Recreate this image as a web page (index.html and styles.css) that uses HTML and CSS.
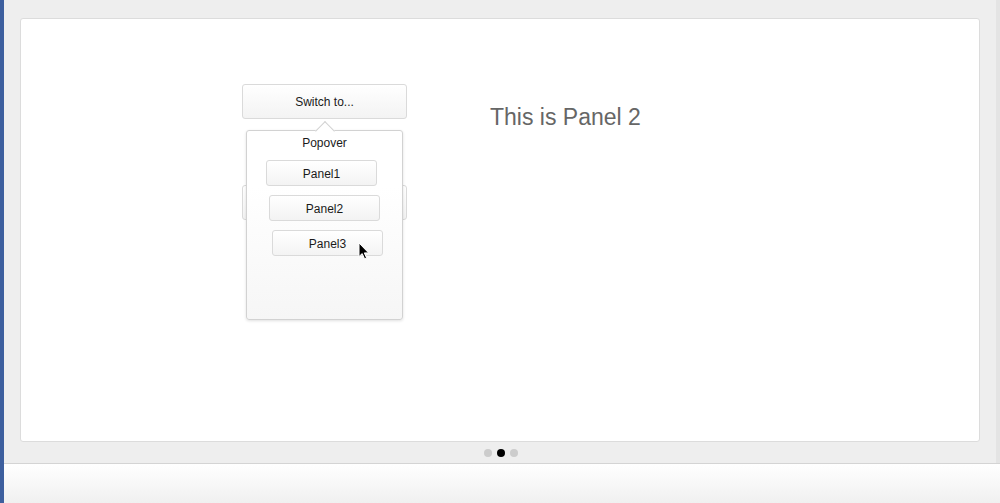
FILE: index.html
```html
<!DOCTYPE html>
<html>
<head>
<meta charset="utf-8">
<link rel="stylesheet" href="styles.css">
</head>
<body>
<div class="shell">
  <div class="edge-left"></div>
  <div class="main">
    <div class="top">
      <div class="stage">
        <div class="card">
          <div class="left-col">
            <button class="btn btn-switch">Switch to...</button>
            <button class="btn btn-switch btn-second" aria-hidden="true"></button>
            <div class="popover">
              <div class="arrow"></div>
              <div class="pop-title">Popover</div>
              <div class="pop-list">
                <button class="btn pbtn shift-l">Panel1</button>
                <button class="btn pbtn">Panel2</button>
                <button class="btn pbtn shift-r">Panel3</button>
              </div>
            </div>
            <svg class="cursor" width="12" height="18" viewBox="0 0 12 18"><path d="M1 1 L1 14.5 L4.2 11.6 L6.6 16.8 L8.6 15.9 L6.3 10.9 L10.6 10.9 Z" fill="#000" stroke="#fff" stroke-width="1" stroke-linejoin="round"/></svg>
          </div>
          <h1 class="panel-title">This is Panel 2</h1>
        </div>
        <div class="dots">
          <span class="dot"></span>
          <span class="dot on"></span>
          <span class="dot"></span>
        </div>
      </div>
      <div class="edge-right"></div>
    </div>
    <div class="bottom-bar"></div>
  </div>
</div>
</body>
</html>
```

FILE: styles.css
```css
html, body {
  margin: 0;
  padding: 0;
  height: 100%;
}
body {
  background: #eeeeee;
  font-family: "Liberation Sans", Arial, sans-serif;
  overflow: hidden;
}
.shell {
  display: flex;
  height: 503px;
}
.edge-left {
  width: 4px;
  background: #3d5f9e;
  flex: none;
}
.main {
  flex: 1;
  display: flex;
  flex-direction: column;
}
.top {
  display: flex;
  flex: none;
  height: 463px;
}
.stage {
  flex: 1;
  padding: 18px 16px 0 16px;
  display: flex;
  flex-direction: column;
}
.edge-right {
  width: 4px;
  background: #e4e4e4;
  flex: none;
}
.card {
  height: 424px;
  box-sizing: border-box;
  background: #ffffff;
  border: 1px solid #dcdcdc;
  border-radius: 3px;
  display: flex;
  align-items: flex-start;
  padding: 65px 0 0 221px;
}
.left-col {
  position: relative;
  width: 165px;
  display: flex;
  flex-direction: column;
  gap: 66px;
  flex: none;
}
.btn {
  font-family: "Liberation Sans", Arial, sans-serif;
  font-size: 12px;
  color: #1a1a1a;
  background: linear-gradient(#ffffff, #f3f3f3);
  border: 1px solid #dadada;
  border-radius: 3px;
  padding: 0;
  margin: 0;
  box-sizing: border-box;
}
.btn-switch {
  width: 165px;
  height: 35px;
  padding-top: 1px;
}
.popover {
  position: absolute;
  left: 4px;
  top: 46px;
  width: 157px;
  height: 190px;
  box-sizing: border-box;
  background: linear-gradient(#ffffff 30%, #f6f6f6);
  border: 1px solid #d2d2d2;
  border-radius: 3px;
  box-shadow: 0 1px 3px rgba(0,0,0,0.12);
  display: flex;
  flex-direction: column;
  align-items: center;
}
.arrow {
  position: absolute;
  top: -7px;
  left: 71px;
  width: 13px;
  height: 13px;
  background: #ffffff;
  border-left: 1px solid #d2d2d2;
  border-top: 1px solid #d2d2d2;
  transform: rotate(45deg);
}
.pop-title {
  position: relative;
  font-size: 12px;
  color: #1a1a1a;
  margin-top: 5px;
  line-height: 14px;
}
.pop-list {
  display: flex;
  flex-direction: column;
  align-items: center;
  gap: 9px;
  margin-top: 10px;
}
.pbtn {
  width: 111px;
  height: 26px;
  padding-top: 1px;
}
.shift-l { margin-right: 6px; }
.shift-r { margin-left: 6px; }
.cursor {
  position: absolute;
  left: 116px;
  top: 158px;
}
.panel-title {
  margin: 19px 0 0 83px;
  font-size: 23px;
  font-weight: normal;
  line-height: 28px;
  color: #666666;
}
.dots {
  flex: 1;
  display: flex;
  justify-content: center;
  align-items: center;
  gap: 5px;
  padding-left: 1px;
}
.dot {
  width: 8px;
  height: 8px;
  border-radius: 50%;
  background: #cccccc;
}
.dot.on {
  background: #000000;
}
.bottom-bar {
  flex: 1;
  border-top: 1px solid #d4d4d4;
  background: linear-gradient(#ffffff, #f0f0f0);
}
```
